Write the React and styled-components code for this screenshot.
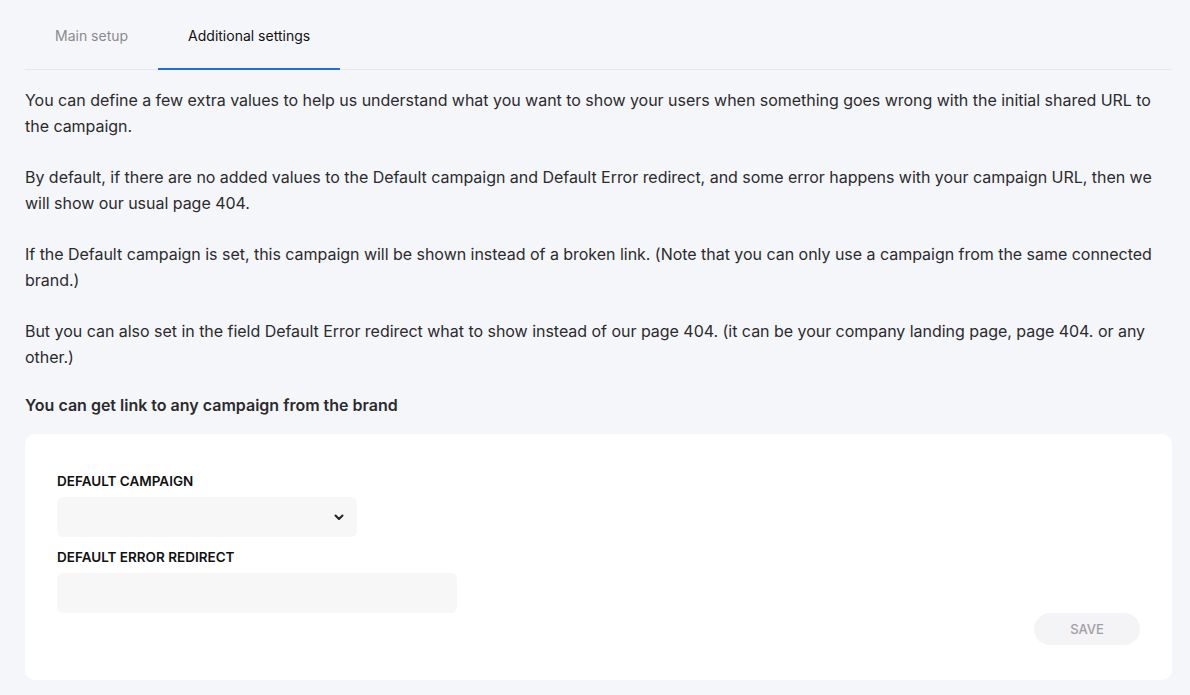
import React, { useState } from "react"
import styled, { createGlobalStyle } from "styled-components"

const GlobalStyle = createGlobalStyle`
    body {
        margin: 0;
        background: #f5f6fa;
        font-family: Inter, "Noto Sans", sans-serif;
        color: #2b2b2e;
    }
`

const tabs = ["Main setup", "Additional settings"]

const paragraphs = [
    "You can define a few extra values to help us understand what you want to show your users when something goes wrong with the initial shared URL to the campaign.",
    "By default, if there are no added values to the Default campaign and Default Error redirect, and some error happens with your campaign URL, then we will show our usual page 404.",
    "If the Default campaign is set, this campaign will be shown instead of a broken link. (Note that you can only use a campaign from the same connected brand.)",
    "But you can also set in the field Default Error redirect what to show instead of our page 404. (it can be your company landing page, page 404. or any other.)",
]

const Chevron = () => (
    <svg width="10" height="7" viewBox="0 0 10 7">
        <path d="M1.5 1.5 L5 5 L8.5 1.5" fill="none" stroke="#222" strokeWidth="2" strokeLinecap="round" strokeLinejoin="round" />
    </svg>
)

const App = () => {
    const [active, setActive] = useState(1)
    const [redirect, setRedirect] = useState("")

    return (
        <Page>
            <GlobalStyle />
            <TabBar>
                {tabs.map((t, i) => (
                    <Tab key={t} active={i === active} onClick={() => setActive(i)}>
                        {t}
                    </Tab>
                ))}
            </TabBar>
            <Intro>
                {paragraphs.map((p, i) => <Para key={i}>{p}</Para>)}
                <Subtitle>You can get link to any campaign from the brand</Subtitle>
            </Intro>
            <Card>
                <Field>
                    <Label>Default campaign</Label>
                    <Select>
                        <Chevron />
                    </Select>
                </Field>
                <Field>
                    <Label>Default error redirect</Label>
                    <Input value={redirect} onChange={e => setRedirect(e.target.value)} />
                </Field>
                <Actions>
                    <SaveButton disabled>SAVE</SaveButton>
                </Actions>
            </Card>
        </Page>
    )
}

export default App

const Page = styled.div
`
    padding: 0 18px 14px 25px;
`

const TabBar = styled.div
`
    display: flex;
    height: 69px;
    border-bottom: 1px solid #e6e8ee;
`

const Tab = styled.div
`
    display: flex;
    align-items: center;
    padding: 2px 30px 0;
    font-size: 14px;
    color: ${p => p.active ? "#111" : "#8a8a8f"};
    border-bottom: 2px solid ${p => p.active ? "#1a6fe3" : "transparent"};
    margin-bottom: -1px;
    cursor: pointer;
`

const Intro = styled.div
`
    padding-top: 17px;
`

const Para = styled.p
`
    margin: 0 0 25px;
    font-size: 16px;
    line-height: 26px;
    letter-spacing: -0.03px;
    color: #2b2b2e;
`

const Subtitle = styled.h3
`
    margin: -3px 0 0;
    font-size: 16px;
    line-height: 26px;
    font-weight: 600;
    color: #2b2b2e;
`

const Card = styled.div
`
    margin-top: 16px;
    background: #fff;
    border-radius: 10px;
    padding: 38px 32px 35px;
    display: flex;
    flex-direction: column;
`

const Field = styled.div
`
    display: flex;
    flex-direction: column;
    gap: 7px;
    margin-bottom: 11px;
`

const Label = styled.label
`
    font-size: 13.5px;
    line-height: 18px;
    font-weight: 600;
    text-transform: uppercase;
    color: #111;
`

const Select = styled.div
`
    width: 300px;
    height: 40px;
    box-sizing: border-box;
    background: #f7f7f7;
    border-radius: 6px;
    display: flex;
    align-items: center;
    justify-content: flex-end;
    padding-right: 13px;
`

const Input = styled.input
`
    width: 400px;
    height: 40px;
    box-sizing: border-box;
    background: #f7f7f7;
    border: none;
    border-radius: 6px;
    outline: none;
    padding: 0 12px;
    font: inherit;
`

const Actions = styled.div
`
    display: flex;
    justify-content: flex-end;
    margin-top: -11px;
`

const SaveButton = styled.button
`
    width: 106px;
    height: 32px;
    border: none;
    border-radius: 16px;
    background: #f4f3f5;
    color: #a39da9;
    font-family: inherit;
    font-size: 13px;
    font-weight: 500;
`
